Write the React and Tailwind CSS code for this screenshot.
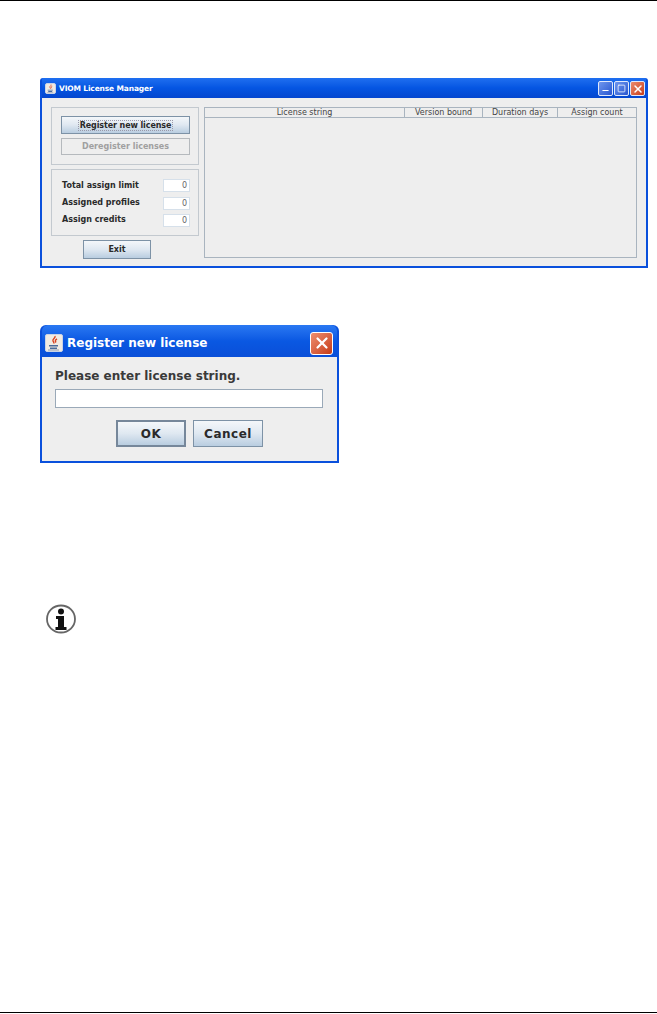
import { X, Minus, Square } from 'lucide-react'

const sans = 'font-["DejaVu_Sans",sans-serif]'

// gradient used on the Java look & feel (ocean) buttons
const btn = 'flex items-center justify-center bg-gradient-to-b from-[#f4f7fa] via-[#dfe8f1] to-[#b9cde0] border border-[#7d92a6] text-[#2a2a2a] font-bold'

function JavaIcon({ size = 12 }) {
  return (
    <span className="flex items-center justify-center rounded-[2px] bg-[#f1ebe2] border border-[#c9d3e6] shrink-0" style={{ width: size, height: size }}>
      <svg viewBox="0 0 16 16" width={size - 2} height={size - 2}>
        <path d="M9 1c1 2-3 3-2 5 .5 1 1 1.500 1 2.500M11 4c-2 1-2 2-1 3.500" fill="none" stroke="#d9401f" strokeWidth="1.400" />
        <path d="M3 10h9v1.500H3zM4 12.500h7V14H4z" fill="#4a6b9a" />
        <path d="M2 15h11" stroke="#8a9ab5" strokeWidth="1" />
      </svg>
    </span>
  )
}

function WinButton({ red, children }) {
  return (
    <span className={`flex items-center justify-center w-[15px] h-[15px] rounded-[2px] border border-[#dfe8fb] ${red ? 'bg-gradient-to-br from-[#ec8a6c] to-[#c73c14]' : 'bg-gradient-to-br from-[#6f96ee] to-[#2a55cf]'}`}>
      {children}
    </span>
  )
}

function Stat({ label, value, className = '', labelClass = '' }) {
  return (
    <div className={`flex items-center justify-between h-[13px] ${className}`}>
      <span className={`text-[8px] font-bold text-[#2a2a2a] ${labelClass}`}>{label}</span>
      <span className="w-[27px] h-[13px] bg-white border border-[#d6e0ea] text-right pr-[2px] text-[8px] leading-[12px] text-[#666]">{value}</span>
    </div>
  )
}

function ManagerWindow() {
  const cols = [
    ['License string', 'w-[200px]'],
    ['Version bound', 'w-[78px]'],
    ['Duration days', 'w-[75px]'],
    ['Assign count', 'flex-1'],
  ]
  return (
    <div className="ml-[40px] w-[608px] h-[190px] flex flex-col bg-[#0a50dc] rounded-t-[3px] px-[2px] pb-[2px]">
      {/* Title bar */}
      <div className="h-[20px] shrink-0 flex items-center pl-[3px] pr-[1px] pt-[1px] bg-gradient-to-b from-[#1f6ff0] via-[#0555e2] to-[#0446cf]">
        <JavaIcon size={11} />
        <span className="ml-[3px] text-[7.500px] tracking-[-0.15px] font-bold text-white">VIOM License Manager</span>
        <div className="ml-auto flex gap-[1px]">
          <WinButton><Minus size={9} color="white" strokeWidth={3} className="translate-y-[2px]" /></WinButton>
          <WinButton><Square size={9} color="white" strokeWidth={2} /></WinButton>
          <WinButton red><X size={12} color="white" strokeWidth={3} /></WinButton>
        </div>
      </div>

      {/* Content */}
      <div className="flex-1 bg-[#eeeeee] flex pl-[9px] pr-[9px] pt-[9px]">
        <div className="w-[148px] shrink-0 flex flex-col">
          <div className="h-[58px] border border-[#c3c9cf] px-[9px] pt-[8px] flex flex-col gap-[4px]">
            <div className={`${btn} w-[129px] h-[18px] text-[8px]`}>
              <span className="border border-dotted border-[#99a] px-[0.5px] leading-[9px] tracking-[-0.1px]">Register new license</span>
            </div>
            <div className="w-[129px] h-[17px] border border-[#b5b9bd] flex items-center justify-center text-[8px] font-bold text-[#a0a0a0]">Deregister licenses</div>
          </div>
          <div className="h-[67px] mt-[4px] border border-[#c3c9cf] pl-[10px] pr-[8px] pt-[9px]">
            <Stat label="Total assign limit" value="0" />
            <Stat label="Assigned profiles" value="0" className="mt-[5px]" labelClass="-translate-y-[1px]" />
            <Stat label="Assign credits" value="0" className="mt-[4px]" labelClass="-translate-y-[1px]" />
          </div>
          <div className={`${btn} w-[68px] h-[19px] mt-[4px] ml-[32px] text-[8px]`}>Exit</div>
        </div>

        <div className="ml-[5px] w-[433px] h-[151px] border border-[#a9b4bf] flex flex-col">
          <div className="h-[10px] flex border-b border-[#a9b4bf] shrink-0">
            {cols.map(([name, w]) => (
              <div key={name} className={`${w} h-full flex items-center justify-center border-r border-[#a9b4bf] last:border-r-0 text-[8px] text-[#444] whitespace-nowrap`}>
                {name}
              </div>
            ))}
          </div>
        </div>
      </div>
    </div>
  )
}

function RegisterDialog() {
  return (
    <div className="ml-[40px] mt-[57px] w-[299px] h-[138px] flex flex-col bg-[#0a50dc] rounded-t-[6px] px-[2px] pb-[2px]">
      <div className="h-[32px] shrink-0 flex items-center pl-[3px] pr-[4px] pt-[4px] rounded-t-[6px] bg-gradient-to-b from-[#2a78f2] via-[#0a58e2] to-[#0a4fd8]">
        <JavaIcon size={18} />
        <span className="ml-[4px] text-[12px] font-bold text-white">Register new license</span>
        <span className="ml-auto w-[23px] h-[23px] rounded-[3px] border border-white bg-gradient-to-br from-[#ee8d6e] to-[#c63a12] flex items-center justify-center">
          <X size={18} color="white" strokeWidth={3} />
        </span>
      </div>
      <div className="flex-1 bg-[#eeeeee] pl-[13px] pt-[11px]">
        <div className="text-[12px] leading-[16px] font-bold text-[#3a3a3a]">Please enter license string.</div>
        <div className="mt-[5px] w-[268px] h-[19px] bg-white border border-[#9aa9b8]" />
        <div className="mt-[12px] ml-[61px] flex gap-[7px]">
          <div className={`${btn} w-[70px] h-[27px] border-2 border-[#76879a] text-[12px] tracking-[0.5px]`}>OK</div>
          <div className={`${btn} w-[70px] h-[27px] text-[12px] tracking-[0.5px]`}>Cancel</div>
        </div>
      </div>
    </div>
  )
}

function InfoIcon() {
  return (
    <svg viewBox="0 0 32 30" width="32" height="30" className="ml-[45px] mt-[141px] shrink-0">
      <ellipse cx="16" cy="15" rx="14" ry="13.500" fill="white" stroke="#666" strokeWidth="1.800" />
      <circle cx="16" cy="7.500" r="3" fill="#111" />
      <path d="M11 12h8v11h2.500v3h-11v-3H13v-8h-2z" fill="#111" />
    </svg>
  )
}

export default function App() {
  return (
    <div className={`${sans} h-[1014px] flex flex-col bg-white pb-[1px]`}>
      <div className="h-[1px] bg-black shrink-0" />
      <div className="h-[77px] shrink-0" />
      <ManagerWindow />
      <RegisterDialog />
      <InfoIcon />
      <div className="mt-auto h-[1px] bg-black shrink-0" />
    </div>
  )
}
